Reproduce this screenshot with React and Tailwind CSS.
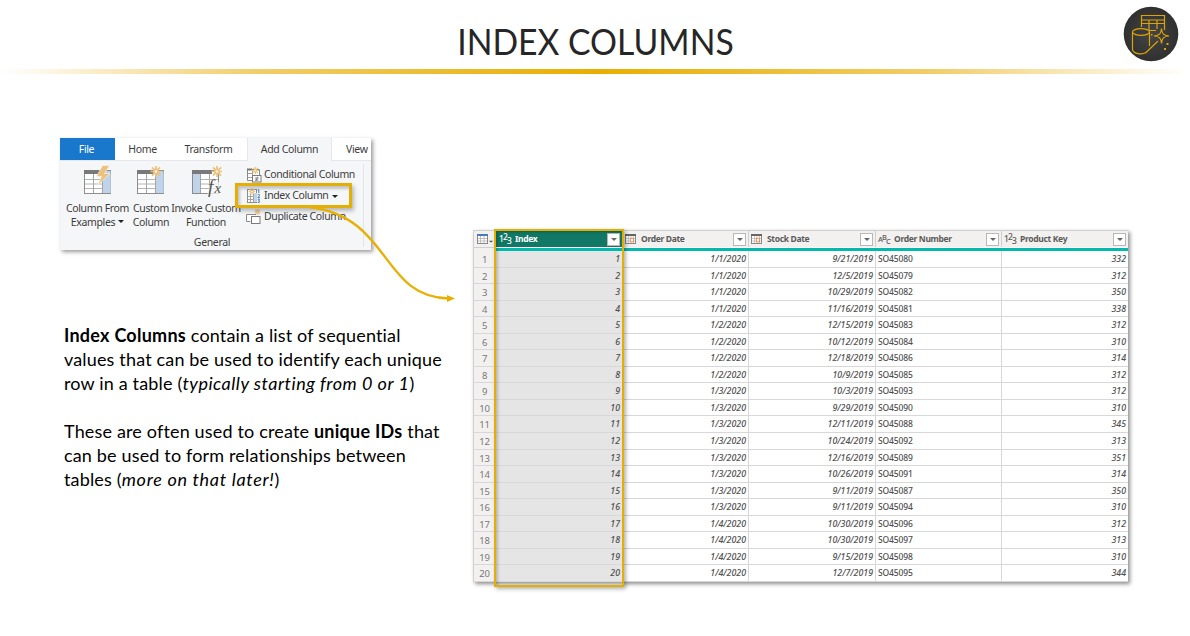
import React from 'react';

const rows = [
  ['1/1/2020', '9/21/2019', 'SO45080', 332],
  ['1/1/2020', '12/5/2019', 'SO45079', 312],
  ['1/1/2020', '10/29/2019', 'SO45082', 350],
  ['1/1/2020', '11/16/2019', 'SO45081', 338],
  ['1/2/2020', '12/15/2019', 'SO45083', 312],
  ['1/2/2020', '10/12/2019', 'SO45084', 310],
  ['1/2/2020', '12/18/2019', 'SO45086', 314],
  ['1/2/2020', '10/9/2019', 'SO45085', 312],
  ['1/3/2020', '10/3/2019', 'SO45093', 312],
  ['1/3/2020', '9/29/2019', 'SO45090', 310],
  ['1/3/2020', '12/11/2019', 'SO45088', 345],
  ['1/3/2020', '10/24/2019', 'SO45092', 313],
  ['1/3/2020', '12/16/2019', 'SO45089', 351],
  ['1/3/2020', '10/26/2019', 'SO45091', 314],
  ['1/3/2020', '9/11/2019', 'SO45087', 350],
  ['1/3/2020', '9/11/2019', 'SO45094', 310],
  ['1/4/2020', '10/30/2019', 'SO45096', 312],
  ['1/4/2020', '10/30/2019', 'SO45097', 313],
  ['1/4/2020', '9/15/2019', 'SO45098', 310],
  ['1/4/2020', '12/7/2019', 'SO45095', 344],
];

const GRID = 'grid grid-cols-[22px_127px_126px_127px_126px_127px]';

function Burst({ x, y, r }) {
  const d = r * 0.72;
  return (
    <g stroke="#ecc27e" strokeWidth={r > 5 ? 1.7 : 1.1} fill="#f5f6f7">
      <path d={`M${x - r} ${y}H${x + r}M${x} ${y - r}V${y + r}M${x - d} ${y - d}L${x + d} ${y + d}M${x - d} ${y + d}L${x + d} ${y - d}`} />
      <circle cx={x} cy={y} r={r * 0.38} />
    </g>
  );
}

function TableIcon({ kind }) {
  const left = kind === 'invoke';
  return (
    <svg className="h-8 w-8" viewBox="0 0 32 32" fill="none">
      <rect x="2.5" y="5.5" width="26" height="23" fill="#fff" stroke="#8d8d8d" />
      <rect x={left ? 3 : 21} y="6" width="7.5" height="22" fill="#bfd3e9" />
      <path d="M3 14.5H28M3 19H28M3 23.5H28" stroke="#b4b4b4" />
      <rect x={left ? 3 : 21} y="9" width="7.5" height="19" fill="#bfd3e9" />
      <path d={left ? 'M10.5 9V28M19.5 9V28' : 'M11.5 9V28M20.5 9V28'} stroke="#a5a5a5" />
      <rect x="2" y="5" width={kind === 'examples' ? 17 : 20} height="4" fill="#797979" />
      {kind === 'examples' ? (
        <path d="M20.500 0.500L14.500 11.500L19.500 11.500L15.500 20.500L28 8.500L22.500 8.500L27.500 0.500Z" fill="#ecc27e" stroke="#f5f6f7" strokeWidth="0.6" />
      ) : (
        <Burst x={left ? 27 : 21} y={6.5} r={5.6} />
      )}
      {left && (
        <>
          <path d="M20 17H32V32H17Z" fill="#f5f6f7" fillOpacity="0.75" />
          <text x="18" y="27.500" fontSize="19" fontStyle="italic" fontFamily="Liberation Serif" fill="#555">f</text>
          <text x="24.500" y="28" fontSize="15" fontStyle="italic" fontFamily="Liberation Serif" fill="#555">x</text>
        </>
      )}
    </svg>
  );
}

function SmallIcon({ kind }) {
  if (kind === 'duplicate') {
    return (
      <svg className="h-4 w-4 shrink-0" viewBox="0 0 16 16" fill="none">
        <path d="M4.500 12.500H0.500V5.500H10" fill="#fff" stroke="#8a8a8a" />
        <Burst x={11.5} y={2.8} r={3} />
        <rect x="5.500" y="7.500" width="8.500" height="7" fill="#fff" stroke="#7b7b7b" />
      </svg>
    );
  }
  if (kind === 'index') {
    return (
      <svg className="h-4 w-4 shrink-0" viewBox="0 0 16 16" fill="none">
        <rect x="1.500" y="1.500" width="9" height="13" fill="#fff" stroke="#8d8d8d" />
        <path d="M2 8.500H10M2 11.500H10M4.500 6V14M7.500 6V14" stroke="#a5a5a5" />
        <rect x="8" y="5" width="3" height="9" fill="#bfd3e9" />
        <Burst x={6} y={3.5} r={3.3} />
        <path
          d="M11.800 2L12.800 1.500V5M11.700 6.800Q12.800 5.900 13.600 6.800Q13.800 7.700 11.800 9.700H14M11.800 11.300Q13.800 10.800 13.500 12Q13.300 12.700 12.500 12.800Q13.900 12.900 13.700 13.900Q13.300 14.900 11.700 14.400"
          stroke="#4a7dba"
          strokeWidth="1"
        />
      </svg>
    );
  }
  return (
    <svg className="h-4 w-4 shrink-0" viewBox="0 0 16 16" fill="none">
      <path d="M6 13.500H1.500V2.500H13.500V8" fill="#fff" stroke="#8a8a8a" />
      <path d="M2 6.500H6M2 10.500H6M6.500 3V9" stroke="#a5a5a5" />
      <path d="M1 2.500H6" stroke="#777" strokeWidth="2" />
      <Burst x={9.5} y={3.5} r={3.5} />
      <rect x="6.500" y="8.500" width="8.500" height="6.500" fill="#fff" stroke="#7b7b7b" />
      <path d="M9 11H12.500M9 13H12.500M11.800 9.800L9.800 14.200" stroke="#666" strokeWidth="0.8" />
    </svg>
  );
}

function Caret({ className = '' }) {
  return (
    <svg className={`inline-block h-[3px] w-[6px] shrink-0 ${className}`} viewBox="0 0 6 3">
      <path d="M0 0H6L3 3Z" fill="currentColor" />
    </svg>
  );
}

function BigButton({ kind, a, b, caret, className }) {
  return (
    <div className={`flex flex-col items-center ${className}`}>
      <TableIcon kind={kind} />
      <div className="mt-[4px] text-center leading-[14px] whitespace-nowrap">
        {a}
        <br />
        {b}
        {caret && <Caret className="mb-[3px] ml-[3px] text-[#222]" />}
      </div>
    </div>
  );
}

function Ribbon() {
  return (
    <div className="h-[112px] w-[311px] overflow-hidden bg-[#f5f6f7] font-['Noto_Sans',sans-serif] text-[10.5px] tracking-[-0.35px] text-[#3c3c3c]">
      <div className="flex h-[23px] border-b border-[#e6e7e8] bg-white leading-[22px]">
        <div className="h-[22px] w-[55px] bg-[#1a78cc] pr-[2px] text-center text-white">File</div>
        <div className="w-[55px] text-center">Home</div>
        <div className="w-[77px] text-center">Transform</div>
        <div className="h-[23px] w-[85px] border-x border-[#e6e7e8] bg-[#f5f6f7] text-center">Add Column</div>
        <div className="flex-1 pl-[14px]">View</div>
      </div>
      <div className="flex h-[70px] pt-[4px]">
        <BigButton kind="examples" a="Column From" b="Examples" caret className="ml-[4px] w-[67px]" />
        <BigButton kind="custom" a="Custom" b="Column" className="w-[40px]" />
        <BigButton kind="invoke" a="Invoke Custom" b="Function" className="w-[70px]" />
        <div className="ml-[5px] flex h-[62px] flex-1 flex-col justify-between tracking-[-0.38px] whitespace-nowrap">
          <div className="flex h-[20px] items-center gap-[2px]"><SmallIcon kind="conditional" />Conditional Column</div>
          <div className="flex h-[20px] items-center gap-[2px]"><SmallIcon kind="index" />Index Column<Caret className="ml-[2px] text-[#222]" /></div>
          <div className="flex h-[20px] items-center gap-[2px]"><SmallIcon kind="duplicate" />Duplicate Column</div>
        </div>
      </div>
      <div className="mr-[7px] -mt-[67px] h-[83px] border-r border-[#e3e4e6]" />
      <div className="-mt-[12px] mr-[7px] text-center leading-[15px]">General</div>
    </div>
  );
}

function TypeMark({ type }) {
  if (type === 'date') {
    return (
      <svg className="mr-px h-[10px] w-[11px] shrink-0" viewBox="0 0 11 10" fill="none">
        <rect x=".5" y=".5" width="10" height="9" fill="#fff" stroke="#888" />
        <path d="M0 1H11" stroke="#666" strokeWidth="2" />
        <path d="M1 4.500H10M1 7H10M3.500 2V9M6 2V9M8.500 2V9" stroke="#aaa" strokeWidth=".6" />
        <rect x="5.300" y="4.200" width="3.200" height="3.600" fill="#fff" stroke="#e58a4f" strokeWidth=".9" />
      </svg>
    );
  }
  const text = type === 'text';
  const [a, b, c] = text ? ['A', 'B', 'C'] : ['1', '2', '3'];
  return (
    <span className={`flex h-[12px] w-[12px] shrink-0 leading-[12px] font-medium ${text ? 'text-[7.5px] tracking-[-0.9px]' : 'text-[8.5px] tracking-[-0.9px]'}`}>
      <span>{a}</span>
      <span className="-translate-y-[2px]">{b}</span>
      <span className="translate-y-[2px]">{c}</span>
    </span>
  );
}

function Head({ type, label, active }) {
  return (
    <div className={`flex h-full items-center border-r border-[#d0d0d0] pr-[2px] pl-[2px] ${active ? 'bg-[#117865] pl-[3px] text-white' : 'bg-[#f2f1f0] text-[#5c5a58]'}`}>
      <TypeMark type={type} />
      <span className="ml-[4px] flex-1 text-[8.5px] font-bold tracking-[-0.33px]">{label}</span>
      <span className="flex h-[13px] w-[13px] items-center justify-center border border-[#b8b8b8] bg-white text-[#666]"><Caret /></span>
    </div>
  );
}

function DataTable() {
  return (
    <div className="h-[352px] w-[655px] overflow-hidden border-t border-l border-[#d0d0d0] bg-white font-['Noto_Sans',sans-serif] text-[#505050]">
      <div className={`${GRID} h-[16px] items-center`}>
        <div className="flex h-full items-center border-r border-[#d0d0d0] bg-[#f2f1f0] pl-[3px]">
          <svg className="h-[10px] w-[11px] shrink-0" viewBox="0 0 11 10" fill="none">
            <rect x=".5" y=".5" width="10" height="9" fill="#fff" stroke="#888" />
            <path d="M0 1H11" stroke="#4a7ab8" strokeWidth="2" />
            <path d="M1 4.500H10M1 7H10M3.500 2V9M7 2V9" stroke="#aaa" strokeWidth=".7" />
          </svg>
          <Caret className="mt-[5px] scale-75" />
        </div>
        <Head type="number" label="Index" active />
        <Head type="date" label="Order Date" />
        <Head type="date" label="Stock Date" />
        <Head type="text" label="Order Number" />
        <Head type="number" label="Product Key" />
      </div>
      <div className="flex h-[4px]">
        <div className="w-[22px] border-t border-r border-[#d0d0d0] bg-[#f2f1f0]" />
        <div className="mt-px flex-1 bg-[#03b8ac]" />
      </div>
      {rows.map(([order, stock, number, key], i) => (
        <div key={number} className={`${GRID} h-[16.55px] grid-rows-[16.55px] text-right text-[8.8px] leading-[17.500px] font-medium italic *:border-r *:border-b *:border-[#d8d8d8] *:pr-[2px]`}>
          <div className="bg-[#f2f1f0] !pr-0 text-center text-[9.5px] leading-[17px] font-normal tracking-[-0.3px] text-[#777] not-italic">{i + 1}</div>
          <div className="bg-[#e5e5e5]">{i + 1}</div>
          <div>{order}</div>
          <div>{stock}</div>
          <div className="pl-[2px] text-left text-[8.5px] leading-[16px] tracking-[-0.12px] not-italic">{number}</div>
          <div>{key}</div>
        </div>
      ))}
    </div>
  );
}

function Logo() {
  return (
    <svg className="h-[56px] w-[56px]" viewBox="0 0 56 56" fill="none">
      <defs>
        <radialGradient id="disc"><stop offset="0" stopColor="#454545" /><stop offset="1" stopColor="#303030" /></radialGradient>
      </defs>
      <circle cx="28" cy="28" r="27.300" fill="url(#disc)" />
      <g stroke="#dca408" strokeWidth="1.200">
        <path d="M18.500 21V9.500H41.500V24M18.500 14H41.500M18.500 17.500H41.500M26 14V26M34 14V23M26 24.500H33" />
        <ellipse cx="18" cy="26" rx="8.500" ry="3.300" fill="#3b3b3b" />
        <path d="M9.500 26V43C9.500 48 19 49 23 46.500M26.500 26V40" />
        <path d="M22.500 47L35 35" />
        <path d="M38.500 22.500C39 28 40.500 29.500 46 30C40.500 30.500 39 32 38.500 37.500C38 32 36.500 30.500 31 30C36.500 29.500 38 28 38.500 22.500Z" fill="#3b3b3b" />
      </g>
      <path d="M43.500 37h2v2h-2zM41 42h2v2h-2zM28 28h1.500v1.500H28z" fill="#dca408" />
    </svg>
  );
}

export default function App() {
  return (
    <main className="relative flex h-[636px] w-[1190px] flex-col overflow-hidden bg-white">
      <header className="grid h-[69px] grid-cols-[80px_1fr_80px] items-start">
        <span />
        <h1 className="mt-[18px] pl-px scale-x-[0.937] text-center font-['Lato',sans-serif] text-[36px] leading-[46px] text-[#262626]">INDEX COLUMNS</h1>
        <div className="mt-[6px] ml-[13px]"><Logo /></div>
      </header>
      <div className="h-[5px] shrink-0 bg-[linear-gradient(to_right,#fff,#f1cd68_22%,#e8ae00_50%,#f1cd68_78%,#fff)]" />

      <div className="flex">
        <section className="ml-[60px] w-[413px] pt-[64px]">
          <div className="w-[311px] shadow-[2px_2px_4px_rgba(0,0,0,0.4)]"><Ribbon /></div>
          <div className="mt-[73px] ml-1 font-['Lato',sans-serif] text-[18px] leading-6 tracking-[0.16px] whitespace-nowrap text-black">
            <p>
              <b className="tracking-[0.26px]">Index Columns</b> contain a list of sequential<br />
              values that can be used to identify each unique<br />
              row in a table (<i className="tracking-[0.5px]">typically starting from 0 or 1</i>)
            </p>
            <p className="mt-6">
              These are often used to create <b className="tracking-[0.26px]">unique IDs</b> that<br />
              can be used to form relationships between<br />
              tables (<i className="tracking-[0.7px]">more on that later!</i>)
            </p>
          </div>
        </section>
        <section className="pt-[156px]">
          <div className="shadow-[2px_2px_4px_rgba(0,0,0,0.45)]"><DataTable /></div>
        </section>
      </div>

      <div className="absolute top-[183px] left-[235px] h-[25px] w-[117px] border-3 border-[#e4ae04] shadow-[2px_3px_4px_rgba(0,0,0,0.25),inset_2px_3px_3px_rgba(0,0,0,0.2)]" />
      <div className="absolute top-[229px] left-[494px] h-[358px] w-[129.500px] border-2 border-[#e4ae04] shadow-[2px_2px_4px_rgba(0,0,0,0.3),inset_2px_1px_3px_rgba(0,0,0,0.2)]" />
      <svg className="absolute top-[200px] left-[300px] h-[110px] w-[160px]" viewBox="300 200 160 110" fill="none">
        <path d="M309 207C392 217 380 297 449 298.500" stroke="#e8b004" strokeWidth="2.400" />
        <path d="M447 295L455 298.600L447 302Z" fill="#e8b004" />
      </svg>
    </main>
  );
}
